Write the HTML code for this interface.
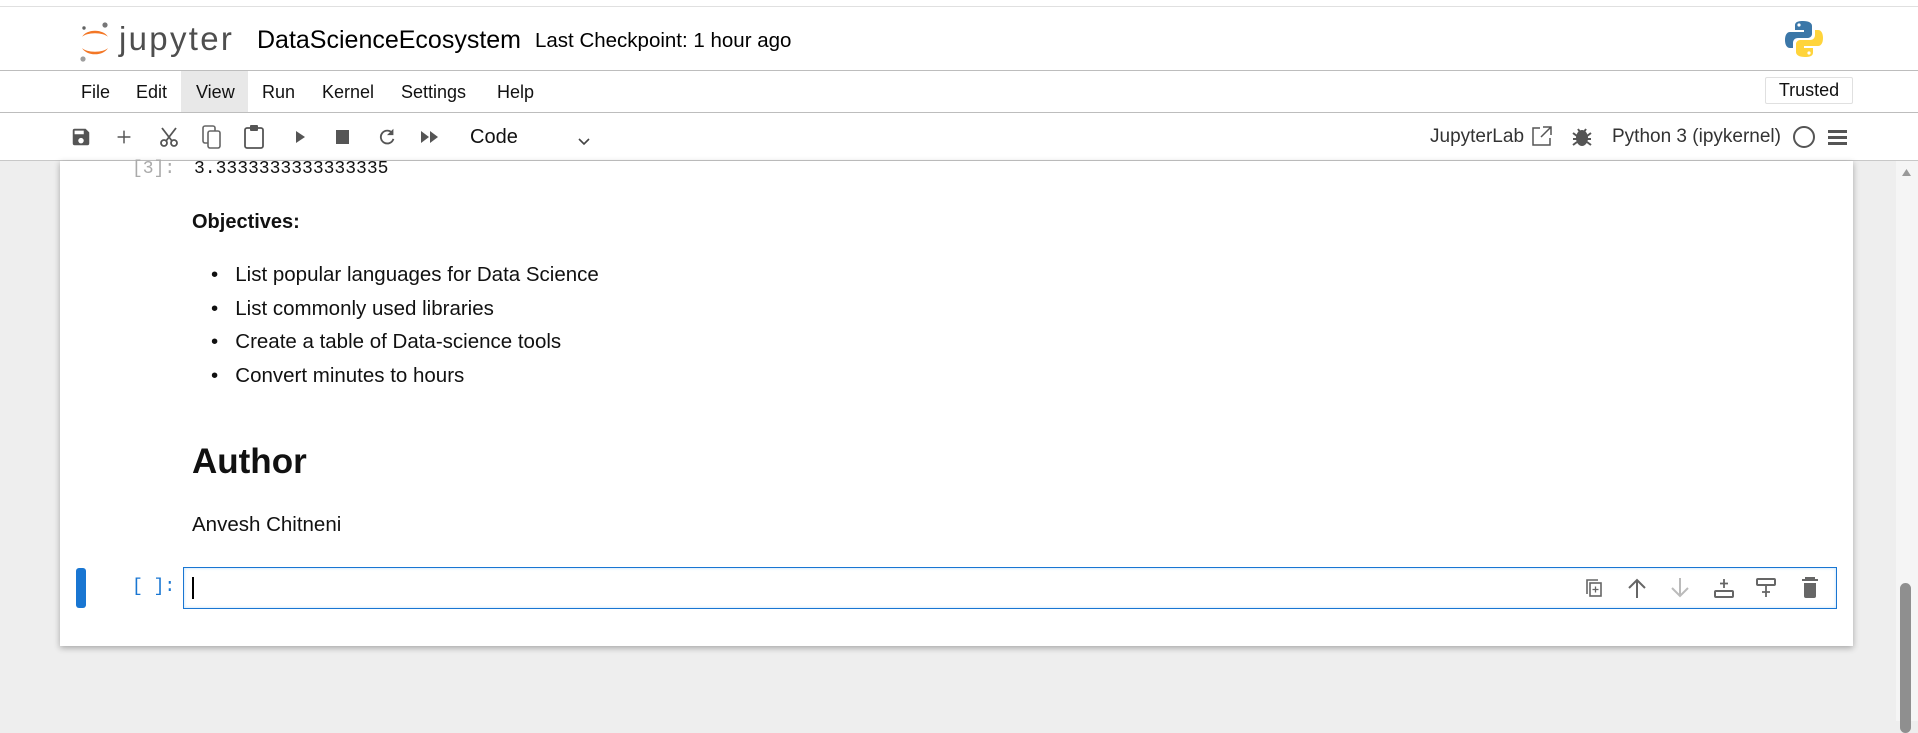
<!DOCTYPE html>
<html><head><meta charset="utf-8"><style>
*{margin:0;padding:0;box-sizing:border-box}
body{width:1918px;height:721px;overflow:hidden;background:#eeeeee;font-family:"Liberation Sans",sans-serif;color:#111;position:relative}
.a{position:absolute;white-space:nowrap}
.ic{position:absolute}
</style></head><body>
<div class="a" style="left:0;top:0;width:1918px;height:160px;background:#fff"></div>
<div class="a" style="left:0;top:6px;width:1918px;height:1px;background:#e0e0e0"></div>
<svg class="ic" style="left:79px;top:20px" width="32" height="44" viewBox="0 0 32 44">
<path d="M3 17 A14 10 0 0 1 29 17 A14 6 0 0 0 3 17Z" fill="#f37726"/>
<path d="M3 28 A14 10 0 0 0 29 28 A14 6 0 0 1 3 28Z" fill="#f37726"/>
<circle cx="26" cy="5" r="2.6" fill="#767677"/><circle cx="4" cy="39" r="2.6" fill="#9e9e9e"/><circle cx="5" cy="8" r="1.7" fill="#616262"/>
</svg>
<div class="a" style="left:119px;top:20px;font-size:33px;color:#4e4e4e;letter-spacing:2.3px">jupyter</div>
<div class="a" style="left:257px;top:26px;font-size:25px;color:#000">DataScienceEcosystem</div>
<div class="a" style="left:535px;top:29px;font-size:20.5px;color:#000">Last Checkpoint: 1 hour ago</div>
<svg class="ic" style="left:1785px;top:20px" width="38" height="38" viewBox="0 0 38 38">
<path d="M18 1c-8 0-8 3-8 5v4h9v2H5c-3 0-5 3-5 8s2 8 5 8h3v-5c0-3 2-5 5-5h10c2 0 4-2 4-4V6c0-3-3-5-9-5z" fill="#3b77a8"/>
<path d="M20 37c8 0 8-3 8-5v-4h-9v-2h14c3 0 5-3 5-8s-2-8-5-8h-3v5c0 3-2 5-5 5H15c-2 0-4 2-4 4v8c0 3 3 5 9 5z" fill="#ffd43b"/>
<circle cx="14" cy="5" r="1.6" fill="#fff"/><circle cx="24" cy="33" r="1.6" fill="#fff"/>
</svg>
<div class="a" style="left:0;top:70px;width:1918px;height:1px;background:#bdbdbd"></div>
<div class="a" style="left:181px;top:71px;width:67px;height:41px;background:#e8e8e8"></div>
<div class="a" style="left:81px;top:82px;font-size:18px">File</div>
<div class="a" style="left:136px;top:82px;font-size:18px">Edit</div>
<div class="a" style="left:196px;top:82px;font-size:18px">View</div>
<div class="a" style="left:262px;top:82px;font-size:18px">Run</div>
<div class="a" style="left:322px;top:82px;font-size:18px">Kernel</div>
<div class="a" style="left:401px;top:82px;font-size:18px">Settings</div>
<div class="a" style="left:497px;top:82px;font-size:18px">Help</div>
<div class="a" style="left:1765px;top:77px;width:88px;height:27px;border:1px solid #e0e0e0;border-radius:2px;font-size:18px;text-align:center;line-height:25px">Trusted</div>
<div class="a" style="left:0;top:112px;width:1918px;height:1px;background:#bdbdbd"></div>
<svg class="ic" style="left:70px;top:126px" width="22" height="22" viewBox="0 0 24 24"><path d="M17 3H5a2 2 0 0 0-2 2v14a2 2 0 0 0 2 2h14a2 2 0 0 0 2-2V7zm-5 16a3 3 0 1 1 0-6 3 3 0 0 1 0 6zm3-10H5V5h10z" fill="#555"/></svg>
<svg class="ic" style="left:113px;top:126px" width="22" height="22" viewBox="0 0 24 24"><path d="M12 5v14M5 12h14" stroke="#555" stroke-width="1.6"/></svg>
<svg class="ic" style="left:157px;top:125px" width="24" height="24" viewBox="0 0 24 24"><circle cx="7" cy="18" r="3" fill="none" stroke="#555" stroke-width="1.8"/><circle cx="17" cy="18" r="3" fill="none" stroke="#555" stroke-width="1.8"/><path d="M9 16L19 3M15 16L5 3" stroke="#555" stroke-width="1.8"/></svg>
<svg class="ic" style="left:200px;top:124px" width="24" height="26" viewBox="0 0 24 26"><rect x="3" y="2" width="12" height="17" rx="2" fill="none" stroke="#666" stroke-width="1.6"/><rect x="8" y="7" width="12" height="17" rx="2" fill="#fff" stroke="#666" stroke-width="1.6"/></svg>
<svg class="ic" style="left:243px;top:124px" width="22" height="26" viewBox="0 0 22 26"><rect x="2" y="4" width="18" height="20" rx="2" fill="none" stroke="#555" stroke-width="1.8"/><rect x="7" y="1" width="8" height="6" rx="1" fill="#555"/></svg>
<svg class="ic" style="left:293px;top:129px" width="14" height="16" viewBox="0 0 14 16"><path d="M3 2l9 6-9 6z" fill="#555"/></svg>
<div class="a" style="left:336px;top:130px;width:13px;height:14px;background:#555"></div>
<svg class="ic" style="left:376px;top:126px" width="22" height="22" viewBox="0 0 24 24"><path d="M18 8A7 7 0 1 0 19 14" fill="none" stroke="#555" stroke-width="2"/><path d="M19 3v7h-7z" fill="#555"/></svg>
<svg class="ic" style="left:419px;top:129px" width="22" height="16" viewBox="0 0 22 16"><path d="M2 2l8 6-8 6zM11 2l8 6-8 6z" fill="#555"/></svg>
<div class="a" style="left:470px;top:126px;font-size:20px;color:#111">Code</div>
<svg class="ic" style="left:577px;top:137px" width="14" height="10" viewBox="0 0 14 10"><path d="M2 2l5 5 5-5" fill="none" stroke="#444" stroke-width="1.6"/></svg>
<div class="a" style="left:1430px;top:126px;font-size:19px;color:#333">JupyterLab</div>
<svg class="ic" style="left:1531px;top:125px" width="22" height="22" viewBox="0 0 22 22"><path d="M9 3H2v17h17v-7M12 2h8v8M20 2L10 12" fill="none" stroke="#555" stroke-width="1.5"/></svg>
<svg class="ic" style="left:1572px;top:126px" width="20" height="22" viewBox="0 0 20 22"><ellipse cx="10" cy="12" rx="6" ry="8" fill="#555"/><path d="M1 7l4 3M19 7l-4 3M1 13h4M19 13h-4M1 19l4-3M19 19l-4-3M6 3l2 3M14 3l-2 3" stroke="#555" stroke-width="2"/></svg>
<div class="a" style="left:1612px;top:126px;font-size:19px;color:#333">Python 3 (ipykernel)</div>
<div class="a" style="left:1793px;top:126px;width:22px;height:22px;border:2px solid #555;border-radius:50%"></div>
<div class="a" style="left:1828px;top:130px;width:19px;height:3px;background:#555;box-shadow:0 6px 0 #555,0 12px 0 #555"></div>
<div class="a" style="left:0;top:160px;width:1918px;height:1px;background:#c8c8c8"></div>
<div class="a" style="left:1896px;top:161px;width:22px;height:560px;background:#f5f5f5"></div>
<svg class="ic" style="left:1901px;top:168px" width="11" height="9" viewBox="0 0 11 9"><path d="M5.5 1L10 8H1z" fill="#999"/></svg>
<div class="a" style="left:1900px;top:583px;width:11px;height:150px;background:#8f8f8f;border-radius:6px"></div>
<div class="a" style="left:60px;top:161px;width:1793px;height:485px;background:#fff;box-shadow:0 2px 6px rgba(0,0,0,.3)"></div>
<div class="a" style="left:132px;top:159px;font-family:'Liberation Mono',monospace;font-size:18px;color:#aaa">[3]:</div>
<div class="a" style="left:194px;top:159px;font-family:'Liberation Mono',monospace;font-size:18px;color:#111">3.3333333333333335</div>
<div class="a" style="left:192px;top:211px;font-size:20px;font-weight:bold;color:#111">Objectives:</div>
<div class="a" style="left:211px;top:258px;font-size:20.5px;line-height:33.5px;color:#111">
<div>•&nbsp;&nbsp;&nbsp;List popular languages for Data Science</div>
<div>•&nbsp;&nbsp;&nbsp;List commonly used libraries</div>
<div>•&nbsp;&nbsp;&nbsp;Create a table of Data-science tools</div>
<div>•&nbsp;&nbsp;&nbsp;Convert minutes to hours</div></div>
<div class="a" style="left:192px;top:442px;font-size:35px;font-weight:bold;color:#111">Author</div>
<div class="a" style="left:192px;top:513px;font-size:20.5px;color:#111">Anvesh Chitneni</div>
<div class="a" style="left:76px;top:568px;width:10px;height:40px;background:#1976d2;border-radius:3px"></div>
<div class="a" style="left:132px;top:577px;font-family:'Liberation Mono',monospace;font-size:18px;color:#1976d2">[ ]:</div>
<div class="a" style="left:183px;top:567px;width:1654px;height:42px;border:1px solid #1976d2;box-shadow:inset 0 0 3px #bbdefb;background:#fff"></div>
<div class="a" style="left:192px;top:577px;width:2px;height:22px;background:#000"></div>
<svg class="ic" style="left:1584px;top:577px" width="20" height="22" viewBox="0 0 20 22"><path d="M3 17V3h11" fill="none" stroke="#666" stroke-width="1.6"/><rect x="6" y="6" width="11" height="13" fill="none" stroke="#666" stroke-width="1.6"/><path d="M11.5 9.5v6M8.5 12.5h6" stroke="#666" stroke-width="1.3"/></svg>
<svg class="ic" style="left:1627px;top:577px" width="20" height="22" viewBox="0 0 20 22"><path d="M10 21V3M2 11l8-8 8 8" fill="none" stroke="#666" stroke-width="2"/></svg>
<svg class="ic" style="left:1670px;top:577px" width="20" height="22" viewBox="0 0 20 22"><path d="M10 1v18M2 11l8 8 8-8" fill="none" stroke="#bbb" stroke-width="2"/></svg>
<svg class="ic" style="left:1713px;top:577px" width="22" height="22" viewBox="0 0 22 22"><path d="M11 2v9M7 6.5h8" stroke="#666" stroke-width="1.8"/><rect x="2" y="14" width="18" height="6" rx="1" fill="none" stroke="#666" stroke-width="2"/></svg>
<svg class="ic" style="left:1755px;top:577px" width="22" height="22" viewBox="0 0 22 22"><rect x="2" y="2" width="18" height="6" rx="1" fill="none" stroke="#666" stroke-width="2"/><path d="M11 9v11M7 15h8" stroke="#666" stroke-width="1.8"/></svg>
<svg class="ic" style="left:1801px;top:577px" width="18" height="22" viewBox="0 0 18 22"><path d="M1 3h16M5 3V1h8v2" stroke="#666" stroke-width="2"/><path d="M3 6h12v13a2 2 0 0 1-2 2H5a2 2 0 0 1-2-2z" fill="#666"/></svg>
</body></html>
